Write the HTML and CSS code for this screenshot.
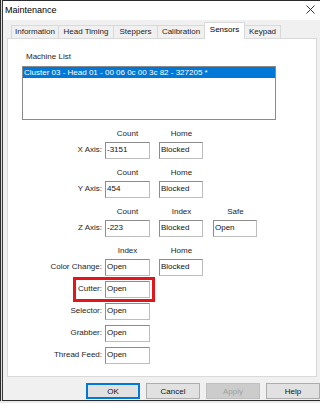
FILE: index.html
```
<!DOCTYPE html>
<html>
<head>
    <title>Maintenance</title>
    <link rel="stylesheet" href="styles.css">
</head>
<body>
    <div class="frame">
        <div class="window">
            <div class="titlebar">
                <span>Maintenance</span>
                <svg class="close" width="9" height="9" viewBox="0 0 9 9">
                    <path d="M0.5 0.5 L8.5 8.5 M8.5 0.5 L0.5 8.5" stroke="#333" stroke-width="1" fill="none"/>
                </svg>
            </div>

            <div class="tabs">
                <div class="tab">Information</div>
                <div class="tab">Head Timing</div>
                <div class="tab">Steppers</div>
                <div class="tab">Calibration</div>
                <div class="tab active">Sensors</div>
                <div class="tab">Keypad</div>
            </div>

            <div class="panel">
                <div class="list-label">Machine List</div>
                <div class="listbox">
                    <div class="item selected">Cluster 03 - Head 01 - 00 06 0c 00 3c 82 - 327205 *</div>
                </div>

                <div class="sensors">
                    <div class="row head"><span></span><span class="col">Count</span><span class="col">Home</span></div>
                    <div class="row"><span class="label">X Axis:</span><span class="box">-3151</span><span class="box">Blocked</span></div>

                    <div class="row head"><span></span><span class="col">Count</span><span class="col">Home</span></div>
                    <div class="row"><span class="label">Y Axis:</span><span class="box">454</span><span class="box">Blocked</span></div>

                    <div class="row head"><span></span><span class="col">Count</span><span class="col">Index</span><span class="col">Safe</span></div>
                    <div class="row"><span class="label">Z Axis:</span><span class="box">-223</span><span class="box">Blocked</span><span class="box">Open</span></div>

                    <div class="row head"><span></span><span class="col">Index</span><span class="col">Home</span></div>
                    <div class="row"><span class="label">Color Change:</span><span class="box">Open</span><span class="box">Blocked</span></div>

                    <!-- highlighted row -->
                    <div class="row single marked"><span class="label">Cutter:</span><span class="box">Open</span></div>
                    <div class="row single"><span class="label">Selector:</span><span class="box">Open</span></div>
                    <div class="row single"><span class="label">Grabber:</span><span class="box">Open</span></div>
                    <div class="row single"><span class="label">Thread Feed:</span><span class="box">Open</span></div>
                </div>
            </div>

            <div class="buttons">
                <button class="btn default">OK</button>
                <button class="btn">Cancel</button>
                <button class="btn" disabled>Apply</button>
                <button class="btn">Help</button>
            </div>
        </div>
    </div>
</body>
</html>
```

FILE: styles.css
```
html {
    background-color: #e9e9e9;
}
body {
    margin: 0;
    padding: 0;
    font-family: "Liberation Sans", Arial, sans-serif;
    font-size: 8px;
    color: #1e1e1e;
}
.frame {
    width: 319px;
    border-left: 1px solid #2b2b2b;
    padding-left: 1px;
    background-color: #dcdcdc;
}
.window {
    height: 399px;
    border-left: 1px solid #3a3a3a;
    border-top: 1px solid #2b2b2b;
    border-bottom: 1px solid #2b2b2b;
    background-color: #f0f0f0;
}
.titlebar {
    height: 19px;
    background-color: white;
    display: flex;
    justify-content: space-between;
    align-items: center;
    padding: 0 6px 2px 2px;
    box-sizing: border-box;
    font-size: 9px;
    color: #000;
}
.close {
    display: block;
}
.tabs {
    display: flex;
    align-items: flex-end;
    height: 18px;
    padding-left: 8px;
}
.tab {
    height: 12px;
    line-height: 11px;
    border: 1px solid #d9d9d9;
    border-bottom: none;
    margin-right: -1px;
    text-align: center;
    background-color: #f0f0f0;
}
.tab:nth-child(1) { width: 46px; }
.tab:nth-child(2) { width: 54px; }
.tab:nth-child(3) { width: 43px; }
.tab:nth-child(4) { width: 46px; }
.tab:nth-child(5) { width: 39px; }
.tab:nth-child(6) { width: 35px; }
.tab.active {
    height: 15px;
    line-height: 13px;
    background-color: white;
    position: relative;
    z-index: 1;
    margin-bottom: -1px;
    padding-bottom: 1px;
    color: #000;
}
.panel {
    margin-left: 4px;
    width: 310px;
    height: 339px;
    box-sizing: border-box;
    border: 1px solid #d9d9d9;
    background-color: white;
}
.list-label {
    margin-top: 13px;
    padding-left: 18px;
    line-height: 10px;
}
.listbox {
    margin: 4px 0 0 14px;
    width: 254px;
    height: 54px;
    box-sizing: border-box;
    border: 1px solid #8a8a8a;
}
.item {
    line-height: 11px;
    height: 11px;
    padding-left: 1px;
    white-space: nowrap;
}
.item.selected {
    background-color: #0078d7;
    color: white;
}
.sensors {
    display: flex;
    flex-direction: column;
    margin-top: 8px;
}
.row {
    display: grid;
    grid-template-columns: 97px 54px 54px 44px;
    height: 17px;
}
.row.head {
    height: 12px;
    line-height: 12px;
    margin-bottom: 2px;
}
.row.head + .row {
    margin-bottom: 8px;
}
.row.single {
    margin-top: 5px;
}
.row.head + .row + .row.single {
    margin-top: -3px;
}
.col {
    width: 45px;
    text-align: center;
}
.label {
    text-align: right;
    padding-right: 3px;
    line-height: 16px;
    white-space: nowrap;
}
.box {
    width: 45px;
    height: 17px;
    box-sizing: border-box;
    border: 1px solid #8c8c8c;
    border-right-color: #bdbdbd;
    border-bottom-color: #bdbdbd;
    padding-left: 1px;
    line-height: 14px;
    color: #111;
    background-color: white;
}
.box + .box {
    width: 44px;
}
.marked {
    position: relative;
}
.marked::after {
    content: "";
    position: absolute;
    left: 65px;
    top: -4px;
    width: 82px;
    height: 25px;
    box-sizing: border-box;
    border: 3px solid #e3141c;
}
.buttons {
    display: flex;
    justify-content: flex-end;
    gap: 6px;
    margin-top: 6px;
    padding-right: 1px;
}
.btn {
    width: 54px;
    height: 16px;
    padding: 0;
    font-family: "Liberation Sans", Arial, sans-serif;
    font-size: 8px;
    color: #111;
    background-color: #e1e1e1;
    border: 1px solid #adadad;
}
.btn.default {
    border-color: #0078d7;
    box-shadow: inset 0 0 0 1px #0078d7;
}
.btn:disabled {
    background-color: #cccccc;
    border-color: #bfbfbf;
    color: #a0a0a0;
}
```
